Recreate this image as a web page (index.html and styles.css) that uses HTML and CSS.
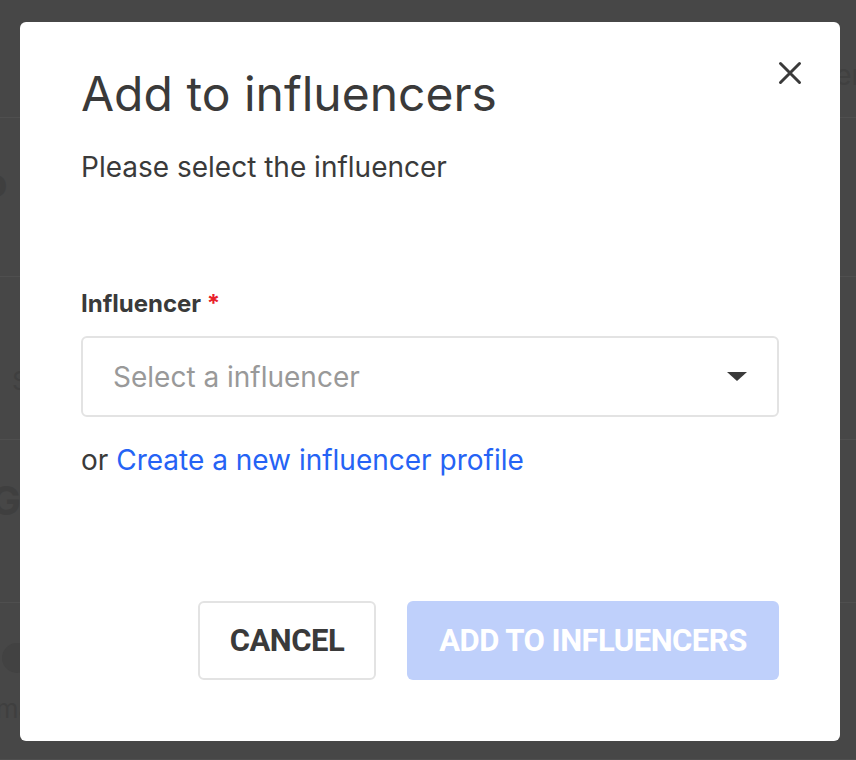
FILE: index.html
```html
<!DOCTYPE html>
<html lang="en">
<head>
<meta charset="utf-8">
<title>Add to influencers</title>
<link rel="stylesheet" href="styles.css">
</head>
<body>
<div class="page">
  <div class="page-row page-row--head"><span class="ghost ghost--right">Enter</span></div>
  <div class="page-row page-row--a"><span class="ghost ghost--big ghost--a">Do</span></div>
  <div class="page-row page-row--b"><span class="ghost ghost--small">Status</span></div>
  <div class="page-row page-row--c"><span class="ghost ghost--big ghost--c">Go</span></div>
  <div class="page-row page-row--d"><span class="ghost-avatar"></span><span class="ghost ghost--small">Email</span></div>
</div>

<div class="overlay">
  <div class="modal" role="dialog" aria-labelledby="modal-title">
    <button class="close" aria-label="Close">
      <svg width="24" height="24" viewBox="0 0 24 24"><path d="M2.5 2.5 L21.5 21.5 M21.5 2.5 L2.5 21.5" stroke="#3a3a3a" stroke-width="3" stroke-linecap="round" fill="none"/></svg>
    </button>
    <h1 id="modal-title" class="title">Add to influencers</h1>
    <p class="subtitle">Please select the influencer</p>

    <label class="label">Influencer <span class="req">*</span></label>
    <div class="select">
      <span class="placeholder">Select a influencer</span>
      <svg class="caret" width="20" height="10" viewBox="0 0 20 10"><path d="M0 0 H20 L10 9 Z" fill="#3a3a3a"/></svg>
    </div>
    <p class="alt">or <a href="#" class="link">Create a new influencer profile</a></p>

    <div class="actions">
      <button class="btn btn--cancel">CANCEL</button>
      <button class="btn btn--primary">ADD TO INFLUENCERS</button>
    </div>
  </div>
</div>
</body>
</html>
```
FILE: styles.css
```css
* { box-sizing: border-box; }
html, body { margin: 0; padding: 0; }
body {
  width: 856px;
  height: 760px;
  overflow: hidden;
  background: #474747;
  font-family: Inter, "Noto Sans", sans-serif;
}

/* faint page behind the overlay */
.page { display: flex; flex-direction: column; }
.page-row {
  border-bottom: 1px solid #4f4f4f;
  display: flex;
  align-items: flex-start;
}
.page-row--head { height: 118px; justify-content: flex-end; padding-top: 58px; }
.page-row--a { height: 159px; padding-top: 40px; }
.page-row--b { height: 163px; padding-top: 88px; }
.page-row--c { height: 163px; padding-top: 36px; }
.page-row--d { height: 157px; flex-direction: column; padding-top: 40px; }
.ghost { color: #3f3f3f; font-family: Inter, sans-serif; white-space: nowrap; }
.ghost--right { font-size: 28px; margin-right: -6px; color: #404040; }
.ghost--big { font-size: 40px; font-weight: 700; }
.ghost--a { margin-left: -46px; }
.ghost--c { margin-left: -9px; }
.ghost--small { font-size: 26px; margin-left: 12px; }
.page-row--d .ghost--small { margin-left: -20px; margin-top: 20px; }
.ghost-avatar {
  width: 30px; height: 30px; border-radius: 50%;
  background: #424242; margin-left: 2px;
}

.overlay {
  position: fixed;
  inset: 0;
}
.modal {
  position: absolute;
  left: 20px;
  top: 22px;
  width: 820px;
  height: 719px;
  background: #fff;
  border-radius: 6px;
  padding: 43px 61px 61px 61px;
  display: flex;
  flex-direction: column;
  color: #3a3a3a;
}
.close {
  position: absolute;
  right: 37px;
  top: 38px;
  width: 26px;
  height: 26px;
  padding: 1px;
  border: 0;
  background: none;
  cursor: pointer;
}
.title {
  margin: 0;
  font-size: 48px;
  line-height: 57px;
  font-weight: 400;
  color: #3a3a3a;
}
.subtitle {
  margin: 27px 0 0;
  font-size: 28px;
  line-height: 36px;
  color: #3a3a3a;
}
.label {
  margin-top: 105px;
  font-size: 24px;
  line-height: 28px;
  font-weight: 700;
  color: #3a3a3a;
}
.req { color: #e8202a; }
.select {
  margin-top: 18px;
  height: 81px;
  border: 2px solid #e3e3e3;
  border-radius: 6px;
  display: flex;
  align-items: center;
  justify-content: space-between;
  padding: 0 30px 0 30px;
}
.placeholder {
  font-size: 28px;
  color: #999;
}
.caret { margin-top: 1px; }
.alt {
  margin: 25px 0 0;
  font-size: 28px;
  line-height: 36px;
  color: #3a3a3a;
}
.link { color: #2563f5; text-decoration: none; }
.actions {
  margin-top: auto;
  display: flex;
  justify-content: flex-end;
  gap: 31px;
}
.btn {
  height: 79px;
  border-radius: 6px;
  font-family: Roboto, sans-serif;
  font-weight: 700;
  font-size: 31px;
  letter-spacing: -0.5px;
  cursor: pointer;
}
.btn--cancel {
  width: 178px;
  background: #fff;
  border: 2px solid #e3e3e3;
  color: #3a3a3a;
}
.btn--primary {
  width: 372px;
  background: #bfd0fb;
  border: 0;
  color: #fff;
}
```
